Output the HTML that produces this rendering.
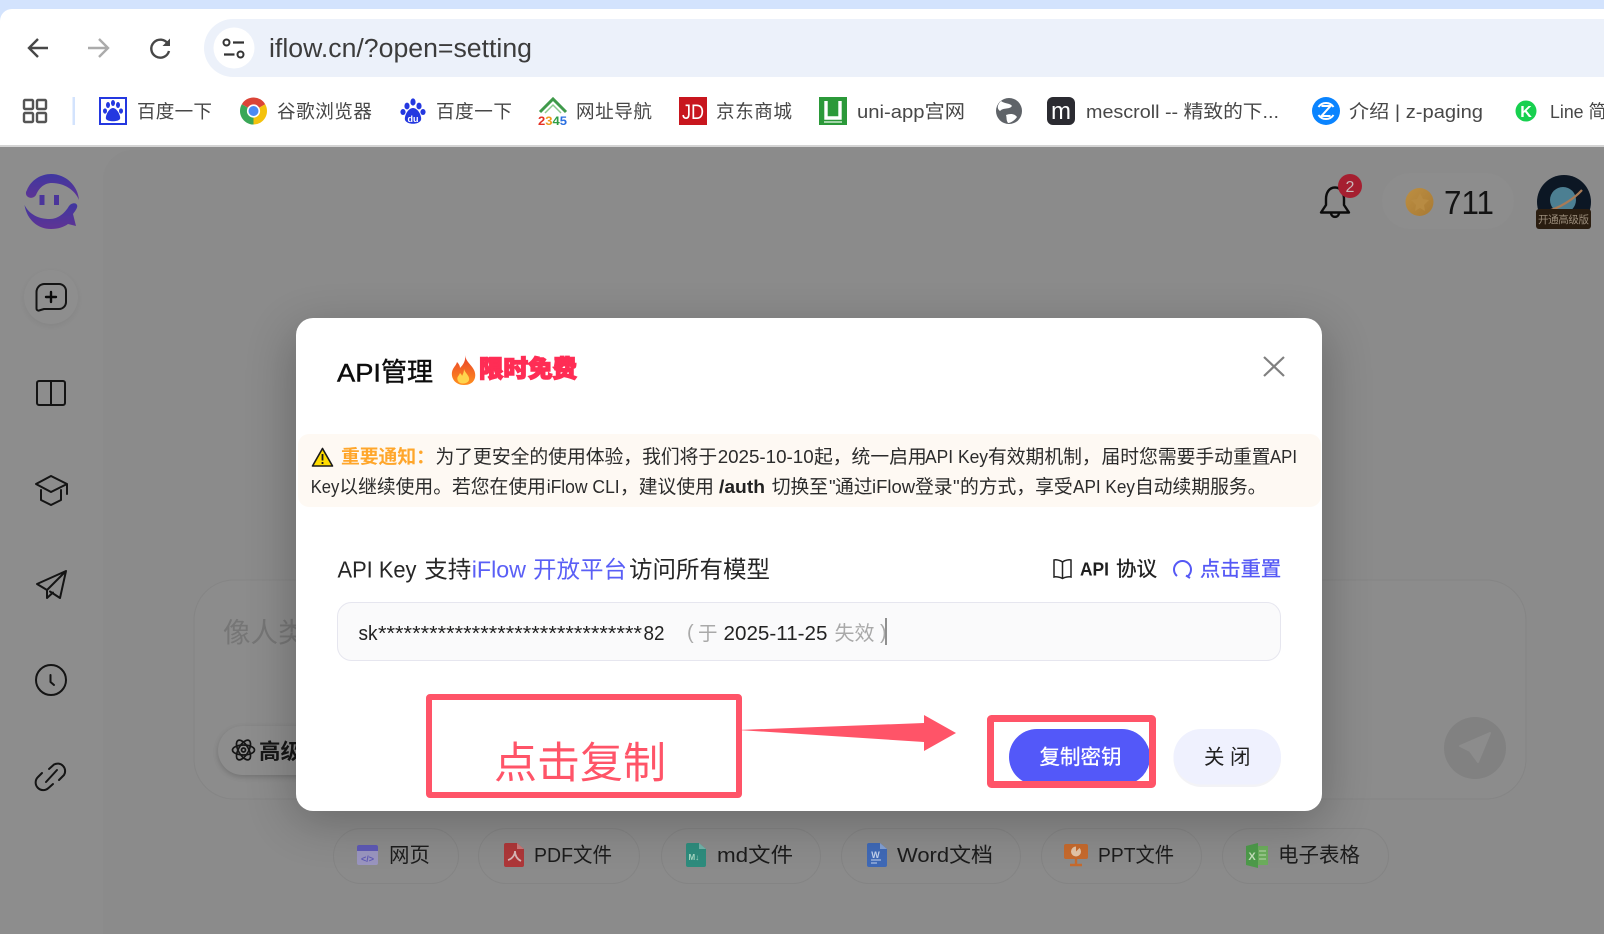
<!DOCTYPE html>
<html lang="zh-CN"><head><meta charset="utf-8"><title>iFlow API管理</title>
<style>
html,body{margin:0;padding:0;width:1604px;height:934px;overflow:hidden;background:#8b8b8b}
svg{display:block}
text{font-family:"Liberation Sans","Noto Sans CJK SC",sans-serif;white-space:pre}
.c{font-family:"Noto Sans CJK SC","Liberation Sans",sans-serif}
.bm{font-size:18.6px;fill:#474747}
.n{font-size:18.8px;fill:#2b2b2b}
.chip{font-size:20.5px;fill:#1c1c1c}
.s{fill:none;stroke:#141414;stroke-width:2;stroke-linecap:round;stroke-linejoin:round}
</style></head><body>
<svg width="1604" height="934" viewBox="0 0 1604 934" xmlns="http://www.w3.org/2000/svg">
<defs>
<filter id="sh" x="-20%" y="-30%" width="140%" height="160%"><feGaussianBlur stdDeviation="24"/></filter>
<filter id="sh2" x="-20%" y="-40%" width="140%" height="200%"><feGaussianBlur stdDeviation="3"/></filter>
<linearGradient id="lg" x1="0" y1="0" x2="0" y2="1"><stop offset="0" stop-color="#3f37a0"/><stop offset="1" stop-color="#5f3394"/></linearGradient>
<linearGradient id="coin" x1="0" y1="0" x2="1" y2="1"><stop offset="0" stop-color="#bd8f42"/><stop offset="1" stop-color="#a87a34"/></linearGradient>
<linearGradient id="fire" x1="0" y1="0" x2="0" y2="1"><stop offset="0" stop-color="#e8402a"/><stop offset="1" stop-color="#ff8f1f"/></linearGradient>
</defs>

<!-- browser chrome -->
<rect width="1604" height="147" fill="#fff"/>
<rect width="1604" height="9" fill="#d3e3fd"/>
<path d="M0 9H12A12 12 0 0 0 0 21Z" fill="#d3e3fd"/>
<rect x="204" y="19" width="1500" height="58" rx="29" fill="#ecf1fa"/>
<rect y="145" width="1604" height="2" fill="#d4d4d4"/>
<path d="M48 48H29M38 39L29 48L38 57" fill="none" stroke="#474747" stroke-width="2.4"/>
<path d="M88 48H108M99 39L108 48L99 57" fill="none" stroke="#ababab" stroke-width="2.4"/>
<path d="M168 44A9 9 0 1 0 169 51" fill="none" stroke="#474747" stroke-width="2.4"/><path d="M170 38.5V46H162.5Z" fill="#474747"/>
<circle cx="234" cy="48" r="20.5" fill="#fff"/>
<circle cx="226.5" cy="42.5" r="3" fill="none" stroke="#333" stroke-width="2"/><path d="M233 42.5H244M224 54.5H234.5" stroke="#333" stroke-width="2.2"/><circle cx="240.5" cy="54.5" r="3" fill="none" stroke="#333" stroke-width="2"/>
<text x="269" y="57" font-size="25.5" fill="#3c3c3c" textLength="263" lengthAdjust="spacingAndGlyphs">iflow.cn/?open=setting</text>

<!-- bookmarks -->
<g fill="none" stroke="#555" stroke-width="2.4"><rect x="24" y="100" width="9" height="9" rx="1"/><rect x="37" y="100" width="9" height="9" rx="1"/><rect x="24" y="113" width="9" height="9" rx="1"/><rect x="37" y="113" width="9" height="9" rx="1"/></g>
<rect x="72.5" y="97" width="2.5" height="28" fill="#d3e3fd"/>
<rect x="100" y="98" width="26" height="26" fill="#fff" stroke="#2438e0" stroke-width="2"/>
<g fill="#2438e0"><ellipse cx="108" cy="105" rx="2" ry="3"/><ellipse cx="118" cy="105" rx="2" ry="3"/><ellipse cx="113" cy="103" rx="2" ry="3"/><ellipse cx="105" cy="111" rx="2" ry="2.6"/><ellipse cx="121" cy="111" rx="2" ry="2.6"/><path d="M113 108C109 108 105 116 106 119C108 122 118 122 120 119C121 116 117 108 113 108Z"/></g>
<text class="bm c" x="137" y="118" textLength="75">百度一下</text>
<g transform="translate(253.5 111)"><path d="M-11.7-6.75A13.5 13.5 0 0 1 11.7-6.75L0 0Z" fill="#db4437"/><path d="M11.7-6.75A13.5 13.5 0 0 1 0 13.5L0 0Z" fill="#f4c20d"/><path d="M0 13.5A13.5 13.5 0 0 1-11.7-6.75L0 0Z" fill="#3aa757"/><circle r="6.6" fill="#fff"/><circle r="5" fill="#4a8af4"/></g>
<text class="bm c" x="277" y="118" textLength="95">谷歌浏览器</text>
<g fill="#2438e0"><ellipse cx="407" cy="106" rx="2.6" ry="3.4"/><ellipse cx="419" cy="106" rx="2.6" ry="3.4"/><ellipse cx="413" cy="102" rx="2.6" ry="3.6"/><ellipse cx="403" cy="112" rx="2.6" ry="3"/><ellipse cx="423" cy="112" rx="2.6" ry="3"/><path d="M413 108C408 108 404 116 405 120C407 125 419 125 421 120C422 116 418 108 413 108Z"/></g>
<text x="413" y="122" font-size="9" font-weight="700" fill="#fff" text-anchor="middle">du</text>
<text class="bm c" x="436" y="118" textLength="76">百度一下</text>
<path d="M540 112L553 99L566 112" fill="none" stroke="#3f9a4a" stroke-width="3"/><path d="M545 113L553 105L561 113" fill="none" stroke="#8cc98f" stroke-width="1.5"/>
<text x="538" y="125" font-size="12" font-weight="700" textLength="29" lengthAdjust="spacingAndGlyphs"><tspan fill="#e53124">2</tspan><tspan fill="#f19a1c">3</tspan><tspan fill="#2f9e44">4</tspan><tspan fill="#2a6fe0">5</tspan></text>
<text class="bm c" x="576" y="118" textLength="76">网址导航</text>
<rect x="679" y="97" width="28" height="28" fill="#c8161e"/><text x="693" y="119" font-size="21" fill="#fff" text-anchor="middle" textLength="22" lengthAdjust="spacingAndGlyphs">JD</text>
<text class="bm c" x="716" y="118" textLength="76">京东商城</text>
<rect x="819" y="97" width="28" height="28" fill="#2b9939"/><path d="M826 101V118H840V101" fill="none" stroke="#fff" stroke-width="3.4"/><path d="M824 122H842" stroke="#c9e9cd" stroke-width="1.6"/>
<text class="bm" x="857" y="118" textLength="108" lengthAdjust="spacingAndGlyphs">uni-app宫网</text>
<circle cx="1009" cy="111" r="13" fill="#5f6368"/><path d="M1001 101C1005 104 1010 103 1012 106C1009 110 1004 107 1000 111C996 108 998 104 1001 101ZM1006 115C1011 113 1015 114 1017 117C1015 120 1011 123 1008 123C1006 120 1007 118 1006 115Z" fill="#fff"/>
<rect x="1047" y="97" width="28" height="28" rx="6" fill="#2b2b31"/><text x="1061" y="119" font-size="24" fill="#fff" text-anchor="middle">m</text>
<text class="bm" x="1086" y="118" textLength="193" lengthAdjust="spacingAndGlyphs">mescroll -- 精致的下...</text>
<circle cx="1326" cy="111" r="14" fill="#0a84ff"/><path d="M1318.500 107A9 9 0 0 1 1333.500 107M1333.500 115A9 9 0 0 1 1318.500 115M1321.500 106H1330.500L1321.500 116H1330.500" fill="none" stroke="#fff" stroke-width="2"/>
<text class="bm" x="1349" y="118" textLength="134" lengthAdjust="spacingAndGlyphs">介绍 | z-paging</text>
<circle cx="1526" cy="111" r="10.5" fill="#17d04f"/><text x="1526" y="117" font-size="16" font-weight="700" fill="#fff" text-anchor="middle">K</text>
<text class="bm" x="1550" y="118" textLength="74" lengthAdjust="spacingAndGlyphs">Line 简体</text>

<!-- dimmed page -->
<rect y="147" width="1604" height="787" fill="#8d8d8d"/>
<path d="M103 934V180A30 30 0 0 1 133 150H1604V934Z" fill="#8b8b8b"/>

<!-- logo -->
<path d="M27 190C31 180 41 174 51 174C66 174 78 186 79 200C75 190 64 183 52 183C44 183 39 188 36 195C33 200 25 198 26 192Z" fill="url(#lg)"/>
<path d="M24.5 205C27 220 38 229 51 229C58 229 64 227 68 224L76 226L73 214C76 210 78 207 77 205C76 202 71 203 69 206C65 213 58 219 50 219C38 219 29 214 24.5 205Z" fill="url(#lg)"/>
<rect x="39.5" y="195" width="5" height="10" fill="#4b359b"/><rect x="54" y="195" width="5" height="10" fill="#4b359b"/>

<!-- sidebar icons -->
<circle cx="51" cy="299" r="27" fill="#000" opacity=".05" filter="url(#sh2)"/>
<circle cx="51" cy="297" r="27" fill="#8e8e8e"/>
<path class="s" d="M44 284H59A7 7 0 0 1 66 291V302A7 7 0 0 1 59 309H44L39 310.500A2 2 0 0 1 36.500 308.500V292A8 8 0 0 1 44 284Z" stroke="#0a0a0a"/>
<path class="s" d="M51 292V302M46 297H56" style="stroke:#0a0a0a;stroke-width:2.400"/>
<rect class="s" x="37" y="381" width="28" height="24" rx="2"/><path class="s" d="M51 381V405"/>
<path class="s" d="M51 476L67 484L51 492L36 484ZM41 490V500L51 505L61 500V490M67 484V494"/>
<path class="s" d="M66 571L37 584L47 590L66 571L60 598L50 591.500M47 590V598L53 592.500"/>
<circle class="s" cx="51" cy="680" r="15"/><path class="s" d="M50.500 675V682L54 685"/>
<path class="s" d="M49 769L54 764.500A7.500 7.500 0 0 1 64 775L59 780M53 784L48.500 788A7.500 7.500 0 0 1 38 777L42 773M46 782L57 770"/>

<!-- header right -->
<path class="s" d="M1335 187.500C1329 187.500 1326 193 1326 199V205L1321 212.500H1349L1344 205V199C1344 193 1341 187.500 1335 187.500ZM1331 213.500C1332 218 1338 218 1339 213.500" style="stroke:#0c0c0c;stroke-width:2.400"/>
<circle cx="1350" cy="186" r="12" fill="#a51f30"/><text x="1350" y="192" font-size="16" fill="#c9b8ba" text-anchor="middle">2</text>
<rect x="1382" y="173" width="132" height="56" rx="28" fill="#8d8d8d"/>
<circle cx="1419.500" cy="202" r="14" fill="url(#coin)"/><path d="M1420 193L1423 199L1429 200L1424 205L1425 211L1420 208L1415 211L1416 205L1411 200L1417 199Z" fill="#b88b42"/>
<text x="1444" y="214" font-size="33" fill="#131313" textLength="50" lengthAdjust="spacingAndGlyphs">711</text>
<circle cx="1564" cy="202" r="27" fill="#0c1724"/>
<circle cx="1563" cy="200" r="13" fill="#4c7f92"/><path d="M1547 211C1558 209 1574 199 1582 190" fill="none" stroke="#a87a56" stroke-width="2.200"/>
<rect x="1536" y="209" width="55" height="20" rx="3" fill="#2a1d10"/>
<text class="c" x="1538" y="223" font-size="10.500" fill="#9a8c7a" textLength="51">开通高级版</text>

<!-- input card -->
<rect x="194" y="580" width="1332" height="219" rx="40" fill="#8c8c8c" stroke="#858585"/>
<text class="c" x="223" y="642" font-size="27.500" fill="#767676">像人类一样</text>
<rect x="218" y="728" width="200" height="49" rx="24.500" fill="#000" opacity=".18" filter="url(#sh2)"/>
<rect x="218" y="726" width="200" height="49" rx="24.500" fill="#8d8d8d"/>
<g fill="none" stroke="#161616" stroke-width="1.700"><ellipse cx="243.500" cy="750" rx="11" ry="5" /><ellipse cx="243.500" cy="750" rx="11" ry="5" transform="rotate(60 243.500 750)"/><ellipse cx="243.500" cy="750" rx="11" ry="5" transform="rotate(120 243.500 750)"/><circle cx="243.500" cy="750" r="2"/></g>
<text class="c" x="259" y="759" font-size="21.500" font-weight="700" fill="#161616">高级模型</text>
<circle cx="1475" cy="748" r="31" fill="#818181"/>
<path d="M1490 733L1460 746L1470 751L1478 762Z" fill="#8c8c8c" stroke="#8c8c8c" stroke-width="2" stroke-linejoin="round"/>

<!-- file chips -->
<g fill="none" stroke="#848484"><rect x="333.500" y="828.500" width="125" height="55" rx="27.500"/><rect x="478.500" y="828.500" width="161" height="55" rx="27.500"/><rect x="661.500" y="828.500" width="159" height="55" rx="27.500"/><rect x="841.500" y="828.500" width="179" height="55" rx="27.500"/><rect x="1041.500" y="828.500" width="160" height="55" rx="27.500"/><rect x="1222.500" y="828.500" width="166" height="55" rx="27.500"/></g>
<g transform="translate(0 -4)">
<rect x="357" y="849" width="21" height="20" rx="2" fill="#9a95bf"/><path d="M357 851a2 2 0 0 1 2-2h17a2 2 0 0 1 2 2v4h-21Z" fill="#5e59b4"/>
<text x="367.500" y="866" font-size="9" font-weight="700" fill="#5e59b4" text-anchor="middle">&lt;/&gt;</text>
<path d="M506 847H517L524 853V869A2 2 0 0 1 522 871H506A2 2 0 0 1 504 869V849A2 2 0 0 1 506 847Z" fill="#ad3739"/><path d="M517 847L524 853H517Z" fill="#c97a7a"/>
<path d="M508 864C512 863 515 859 515 855C515 860 517 863 521 865" fill="none" stroke="#d9b6b6" stroke-width="1.800"/>
<path d="M688 847H699L706 853V869A2 2 0 0 1 704 871H688A2 2 0 0 1 686 869V849A2 2 0 0 1 688 847Z" fill="#2e8c7d"/><path d="M699 847L706 853H699Z" fill="#73b3aa"/>
<text x="688.500" y="864" font-size="8" font-weight="700" fill="#a8d8c4">M↓</text>
<path d="M869 847H880L887 853V869A2 2 0 0 1 885 871H869A2 2 0 0 1 867 869V849A2 2 0 0 1 869 847Z" fill="#3f69b6"/><path d="M880 847L887 853H880Z" fill="#83a0d4"/>
<text x="875.500" y="862" font-size="9" font-weight="700" fill="#c3d2ec" text-anchor="middle">W</text><path d="M871 864H881M871 867H877" stroke="#c3d2ec"/>
<rect x="1064" y="848" width="24" height="15" rx="2" fill="#c66a2d"/><path d="M1076 863V868M1070 869H1082" stroke="#c66a2d" stroke-width="2.400"/>
<circle cx="1076" cy="855.500" r="5" fill="#e4c5a8"/><path d="M1076 855.500V850.500H1081Z" fill="#c66a2d"/>
<rect x="1257" y="850" width="11" height="19" fill="#6cad5c"/><path d="M1259 855H1266M1259 859H1266M1259 863H1266" stroke="#bcd9b0"/><path d="M1246 850L1258 847V872L1246 869Z" fill="#4d9a4a"/>
<text x="1252" y="864" font-size="11" font-weight="700" fill="#c4dfba" text-anchor="middle">X</text>
</g>
<text class="chip c" x="389" y="862" textLength="41">网页</text>
<text class="chip" x="534" y="862" textLength="78" lengthAdjust="spacingAndGlyphs">PDF文件</text>
<text class="chip" x="717" y="862" textLength="76" lengthAdjust="spacingAndGlyphs">md文件</text>
<text class="chip" x="897" y="862" textLength="96" lengthAdjust="spacingAndGlyphs">Word文档</text>
<text class="chip" x="1098" y="862" textLength="76" lengthAdjust="spacingAndGlyphs">PPT文件</text>
<text class="chip c" x="1278" y="862" textLength="82">电子表格</text>

<!-- modal shadow + modal -->
<rect x="292" y="330" width="1034" height="492" rx="20" fill="#000" opacity=".24" filter="url(#sh)"/>
<rect x="296" y="318" width="1026" height="493" rx="17" fill="#fff"/>

<text x="337" y="381.500" font-size="25" fill="#0c0c0c" stroke="#0c0c0c" stroke-width=".4" textLength="44" lengthAdjust="spacingAndGlyphs">API</text>
<text class="c" x="381" y="381" font-size="26" fill="#0c0c0c" stroke="#0c0c0c" stroke-width=".4">管理</text>
<!-- fire -->
<path d="M465 355C466 362 471 364 474 370C477 376 475 385 464 385C455 385 451 378 452 372C453 367 456 366 457 362C459 364 460 366 460 368C463 365 466 361 465 355Z" fill="url(#fire)"/>
<path d="M464 369C465 373 470 376 469 380C468 384 460 385 458 381C456 377 459 376 460 373C461 374 462 375 462 376C463 374 464 372 464 369Z" fill="#ffd44d"/>
<text class="c" x="479" y="377" font-size="24" font-weight="900" fill="#ff2d55" stroke="#ff2d55" stroke-width="1.400" textLength="98" lengthAdjust="spacingAndGlyphs">限时免费</text>
<path d="M1264 357L1284 376M1284 357L1264 376" stroke="#808080" stroke-width="2.200"/>

<rect x="298" y="434" width="1023" height="73" rx="11" fill="#fef9f3"/>
<path d="M322.500 448.500L332.500 466H312.500Z" fill="#ffdc00" stroke="#1b1b1b" stroke-width="1.600" stroke-linejoin="round"/><path d="M322.500 454V460.500M322.500 462V464" stroke="#1b1b1b" stroke-width="1.800"/>
<text class="c" x="341" y="463" font-size="18.800" font-weight="700" fill="#ffa62b">重要通知：</text>
<text class="n c" x="435.500" y="463">为了更安全的使用体验，我们将于</text>
<text class="n" x="717.700" y="463" textLength="96" lengthAdjust="spacingAndGlyphs">2025-10-10</text>
<text class="n c" x="814" y="463">起，统一启用</text>
<text class="n" x="925" y="463" textLength="63" lengthAdjust="spacingAndGlyphs">API Key</text>
<text class="n c" x="988" y="463">有效期机制，</text>
<text class="n c" x="1101.500" y="463">届时您需要手动重置</text>
<text class="n" x="1270" y="463" textLength="27" lengthAdjust="spacingAndGlyphs">API</text>

<text class="n" x="310.700" y="493" textLength="28.600" lengthAdjust="spacingAndGlyphs">Key</text>
<text class="n c" x="339.300" y="493">以继续使用。若您在使用</text>
<text class="n" x="546.700" y="493" textLength="73" lengthAdjust="spacingAndGlyphs">iFlow CLI</text>
<text class="n c" x="620" y="493">，建议使用</text>
<text class="n" x="719" y="493" font-weight="700" textLength="46" lengthAdjust="spacingAndGlyphs" style="fill:#222">/auth</text>
<text class="n c" x="771.700" y="493">切换至</text>
<text class="n" x="829" y="493">"</text>
<text class="n c" x="835" y="493">通过</text>
<text class="n" x="872" y="493" textLength="43" lengthAdjust="spacingAndGlyphs">iFlow</text>
<text class="n c" x="915" y="493">登录</text>
<text class="n" x="953" y="493">"</text>
<text class="n c" x="960" y="493">的方式，享受</text>
<text class="n" x="1073" y="493" textLength="62" lengthAdjust="spacingAndGlyphs">API Key</text>
<text class="n c" x="1135" y="493">自动续期服务。</text>

<g font-size="23.500" fill="#262626">
<text x="337.500" y="577.500" textLength="79" lengthAdjust="spacingAndGlyphs">API Key</text>
<text class="c" x="424.300" y="577.500">支持</text>
<text x="471.700" y="577.500" fill="#5a5ff6" textLength="54.300" lengthAdjust="spacingAndGlyphs">iFlow</text>
<text class="c" x="533" y="577.500" fill="#5a5ff6">开放平台</text>
<text class="c" x="629" y="577.500">访问所有模型</text>
</g>
<!-- book icon -->
<path d="M1062.500 562C1060 560 1056 559.500 1054 560V577C1056 576.500 1060 577 1062.500 578.500C1065 577 1069 576.500 1071 577V560C1069 559.500 1065 560 1062.500 562ZM1062.500 562V578" fill="none" stroke="#222" stroke-width="1.500"/>
<text x="1080" y="575.500" font-size="18.500" font-weight="700" fill="#1f1f1f" textLength="29" lengthAdjust="spacingAndGlyphs">API</text>
<text class="c" x="1116" y="576" font-size="20.500" fill="#1f1f1f" stroke="#1f1f1f" stroke-width=".3">协议</text>
<path d="M1177 576A8.500 8.500 0 1 1 1188 576M1186 575.500L1190 578" fill="none" stroke="#5558f5" stroke-width="2"/>
<text class="c" x="1200" y="576" font-size="20.300" fill="#5558f5" stroke="#5558f5" stroke-width=".3">点击重置</text>

<rect x="337.500" y="602.500" width="943" height="58" rx="14" fill="#fafafb" stroke="#e6e6ef"/>
<g font-size="20" fill="#222">
<text x="358.500" y="640" textLength="19" lengthAdjust="spacingAndGlyphs">sk</text>
<text x="378" y="640" textLength="264" lengthAdjust="spacingAndGlyphs">*******************************</text>
<text x="643.500" y="640" textLength="21" lengthAdjust="spacingAndGlyphs">82</text>
<text x="687" y="639" fill="#a9a9a9">(</text>
<text class="c" x="698" y="640" font-size="19.500" fill="#a9a9a9">于</text>
<text x="723.500" y="640" textLength="104" lengthAdjust="spacingAndGlyphs">2025-11-25</text>
<text class="c" x="834.500" y="640" fill="#a9a9a9">失效</text>
<text x="880" y="639" fill="#a9a9a9">)</text>
</g>
<rect x="885" y="618" width="2" height="27" fill="#8f8f8f"/>

<!-- buttons -->
<rect x="1173.500" y="731" width="107.500" height="56" rx="28" fill="#f3f3f6"/>
<rect x="1173.500" y="729" width="107.500" height="55.500" rx="27.700" fill="#eff1fe"/>
<text class="c" x="1204" y="764" font-size="20.500" fill="#222">关</text>
<text class="c" x="1230" y="764" font-size="20.500" fill="#222">闭</text>
<rect x="1009" y="729" width="141" height="56" rx="28" fill="#5358f9"/>
<text class="c" x="1039.500" y="764" font-size="20.500" fill="#fff" stroke="#fff" stroke-width=".3" textLength="82">复制密钥</text>

<!-- annotations -->
<rect x="429" y="697" width="310" height="98" rx="1" fill="none" stroke="#ff5468" stroke-width="6"/>
<text class="c" x="494" y="778" font-size="43" fill="#ff5468" textLength="172">点击复制</text>
<path d="M738 730L924 723V715L956 733L924 751V742Z" fill="#ff5468"/>
<rect x="990.500" y="718.500" width="162" height="66" rx="1" fill="none" stroke="#ff5468" stroke-width="7"/>
</svg>
</body></html>
